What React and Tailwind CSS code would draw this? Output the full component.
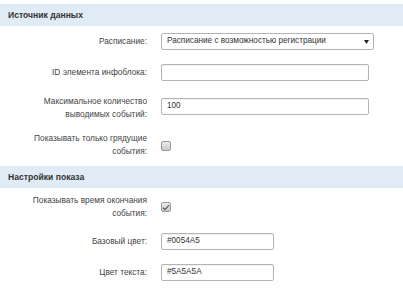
import React from "react"

const font = { fontFamily: '"Liberation Sans", Arial, sans-serif' }

const SectionHeader = ({ title }) => (
  <div className="h-[22px] flex items-center pl-[8px] bg-[#e1ebf6] text-[8.6px] font-bold text-[#333]">
    {title}
  </div>
)

const Label = ({ children }) => (
  <div className="w-[147px] shrink-0 text-right text-[8.3px] leading-[13px] text-[#444] whitespace-nowrap">
    {children}
  </div>
)

const TextInput = ({ value, width }) => (
  <div
    className={`ml-[14px] h-[17px] ${width} border border-[#b4b4b4] rounded-[2px] bg-white flex items-center pl-[5px] text-[8.2px] text-[#333] shadow-[inset_0_1px_1px_rgba(0,0,0,0.06)]`}
  >
    {value}
  </div>
)

const Checkbox = ({ checked, className }) => (
  <div
    className={`ml-[14px] w-[10px] h-[10px] rounded-[2px] border border-[#9a9a9a] bg-gradient-to-b from-[#ececec] to-[#c9c9c9] flex items-center justify-center ${className}`}
  >
    {checked && (
      <svg width="8" height="7" viewBox="0 0 8 7">
        <path d="M1 3.8 L3 5.6 L7 1.2" fill="none" stroke="#555" strokeWidth="1.2" />
      </svg>
    )}
  </div>
)

const App = () => {
  return (
    <div className="w-[403px] h-[294px] bg-white pt-[4px] overflow-hidden" style={font}>
      <SectionHeader title="Источник данных" />

      {/* Select row */}
      <div className="flex items-center mt-[7px]">
        <Label>Расписание:</Label>
        <div className="ml-[14px] h-[17px] w-[213px] border border-[#b4b4b4] rounded-[2px] bg-white flex items-center justify-between pl-[5px] pr-[4px] text-[8.2px] text-[#333]">
          <span>Расписание с возможностью регистрации</span>
          <svg width="5" height="4" viewBox="0 0 5 4">
            <path d="M0 0 L5 0 L2.5 4 Z" fill="#222" />
          </svg>
        </div>
      </div>

      <div className="flex items-center mt-[14px]">
        <Label>ID элемента инфоблока:</Label>
        <TextInput value="" width="w-[208px]" />
      </div>

      <div className="flex items-start mt-[14px]">
        <Label>
          Максимальное количество
          <br />
          выводимых событий:
        </Label>
        <div className="mt-[3px]">
          <TextInput value="100" width="w-[208px]" />
        </div>
      </div>

      <div className="flex items-start mt-[11px]">
        <Label>
          Показывать только грядущие
          <br />
          события:
        </Label>
        <Checkbox className="mt-[9px]" />
      </div>

      <div className="mt-[8px]">
        <SectionHeader title="Настройки показа" />
      </div>

      <div className="flex items-start mt-[6px]">
        <Label>
          Показывать время окончания
          <br />
          события:
        </Label>
        <Checkbox checked className="mt-[8px]" />
      </div>

      <div className="flex items-center mt-[13px]">
        <Label>Базовый цвет:</Label>
        <TextInput value="#0054A5" width="w-[113px]" />
      </div>

      <div className="flex items-center mt-[14px]">
        <Label>Цвет текста:</Label>
        <TextInput value="#5A5A5A" width="w-[113px]" />
      </div>
    </div>
  )
}

export default App
